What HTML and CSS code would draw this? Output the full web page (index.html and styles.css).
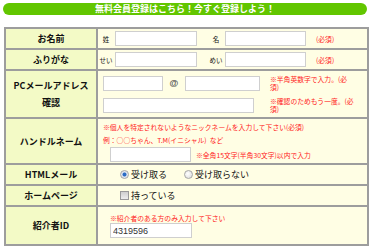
FILE: index.html
```html
<!DOCTYPE html>
<html lang="ja">
<head>
    <meta charset="UTF-8">
    <meta name="viewport" content="width=device-width, initial-scale=1.0">
    <title>無料会員登録</title>
    <link rel="stylesheet" href="styles.css">
</head>
<body>
    <div class="page">
        <div class="banner">無料会員登録はこちら！今すぐ登録しよう！</div>

        <div class="form">
            <div class="lbl">お名前</div>
            <div class="val name-row">
                <span class="nm">姓</span>
                <input type="text" class="txt w82">
                <span class="nm second">名</span>
                <input type="text" class="txt w81">
                <span class="req">(必須)</span>
            </div>

            <div class="lbl">ふりがな</div>
            <div class="val name-row">
                <span class="nm">せい</span>
                <input type="text" class="txt w82">
                <span class="nm second">めい</span>
                <input type="text" class="txt w81">
                <span class="req">(必須)</span>
            </div>

            <div class="lbl tall">PCメールアドレス<br>確認</div>
            <div class="val mail">
                <div class="mail-row">
                    <div class="mail-inputs">
                        <input type="text" class="txt w60">
                        <span class="at">@</span>
                        <input type="text" class="txt w75">
                    </div>
                    <span class="note">※半角英数字で入力。(必須)</span>
                </div>
                <div class="mail-row">
                    <div class="mail-inputs">
                        <input type="text" class="txt w151">
                    </div>
                    <span class="note">※確認のためもう一度。(必須)</span>
                </div>
            </div>

            <div class="lbl">ハンドルネーム</div>
            <div class="val handle">
                <p class="note line">※個人を特定されないようなニックネームを入力して下さい(必須)</p>
                <p class="note line">例：○○ちゃん、T.M(イニシャル)&nbsp; など</p>
                <div class="handle-row">
                    <input type="text" class="txt w81">
                    <span class="note">※全角15文字(半角30文字)以内で入力</span>
                </div>
            </div>

            <div class="lbl">HTMLメール</div>
            <div class="val opts">
                <label class="opt"><input type="radio" name="html" checked>受け取る</label>
                <label class="opt"><input type="radio" name="html">受け取らない</label>
            </div>

            <div class="lbl">ホームページ</div>
            <div class="val opts">
                <label class="opt"><input type="checkbox">持っている</label>
            </div>

            <div class="lbl">紹介者ID</div>
            <div class="val intro">
                <p class="note">※紹介者のある方のみ入力して下さい</p>
                <input type="text" class="txt w82" value="4319596">
            </div>
        </div>
    </div>
</body>
</html>
```

FILE: styles.css
```css
* {
    margin: 0;
    padding: 0;
    box-sizing: border-box;
}

body {
    background-color: #ffffff;
    font-family: "Noto Sans CJK JP", "Liberation Sans", sans-serif;
    color: #111;
}

.page {
    padding-top: 3px;
}

.banner {
    margin: 0 4px 0 3px;
    height: 12px;
    border-radius: 6px;
    background-color: #62c600;
    color: #ffffff;
    font-size: 9px;
    font-weight: bold;
    line-height: 12px;
    text-align: center;
}

.form {
    display: grid;
    grid-template-columns: 90px 1fr;
    grid-template-rows: 19px 19px 46px 44px 19px 19px 37px;
    gap: 2px;
    width: 365px;
    margin: 12px 0 0 4px;
    padding: 2px;
    background-color: #9d9d9d;
}

.lbl {
    display: flex;
    justify-content: center;
    align-items: center;
    background-color: #f3fac6;
    font-size: 9px;
    font-weight: bold;
    text-align: center;
}

.lbl.tall {
    line-height: 17px;
}

.val {
    background-color: #fffee4;
    font-size: 7px;
}

.txt {
    height: 15px;
    border: 1px solid #cfcfcf;
    background-color: #ffffff;
    padding: 0 2px;
    font-family: "Liberation Sans", sans-serif;
    font-size: 9px;
    color: #333;
    outline: none;
}

.w60 { width: 60px; }
.w75 { width: 75px; }
.w81 { width: 81px; }
.w82 { width: 82px; }
.w151 { width: 151px; }

.name-row {
    display: flex;
    align-items: center;
}

.nm {
    width: 16px;
    margin-right: 1px;
    text-align: center;
    font-size: 6.5px;
}

.nm.second {
    margin-left: 11px;
}

.req {
    margin-left: 10px;
    color: #f22;
    font-size: 6.8px;
}

.note {
    color: #f22;
    font-size: 6.8px;
}

.mail {
    display: flex;
    flex-direction: column;
    gap: 4px;
    padding: 3px 0 0 5px;
}

.mail-row {
    display: grid;
    grid-template-columns: 167px 84px;
    align-items: center;
    height: 18px;
}

.mail-row .note {
    line-height: 8px;
}

.mail-inputs {
    display: flex;
    align-items: center;
}

.at {
    width: 22px;
    text-align: center;
    font-family: "Liberation Sans", sans-serif;
    font-size: 9px;
    font-weight: bold;
    color: #555;
}

.handle {
    padding: 2px 0 0 5px;
}

.handle .line {
    line-height: 13px;
}

.handle-row {
    display: flex;
    align-items: center;
    gap: 5px;
    margin-left: 7px;
}

.opts {
    display: flex;
    align-items: center;
    gap: 17px;
    padding-left: 22px;
}

.opt {
    display: flex;
    align-items: center;
    gap: 2px;
    font-size: 9px;
}

.opt input[type="radio"] {
    appearance: none;
    width: 9px;
    height: 9px;
    border: 1px solid #a6a6a6;
    border-radius: 50%;
    background: radial-gradient(circle at 40% 40%, #ffffff, #d8d8d8);
}

.opt input[type="radio"]:checked {
    background: radial-gradient(circle, #2b6cc4 0, #2b6cc4 1.6px, #dfe6ef 2.4px);
}

.opt input[type="checkbox"] {
    appearance: none;
    width: 9px;
    height: 9px;
    border: 1px solid #9a9a9a;
    background: linear-gradient(#cfcfcf, #ededed);
}

.intro {
    padding: 7px 0 0 12px;
}

.intro .note {
    line-height: 9px;
}
```
